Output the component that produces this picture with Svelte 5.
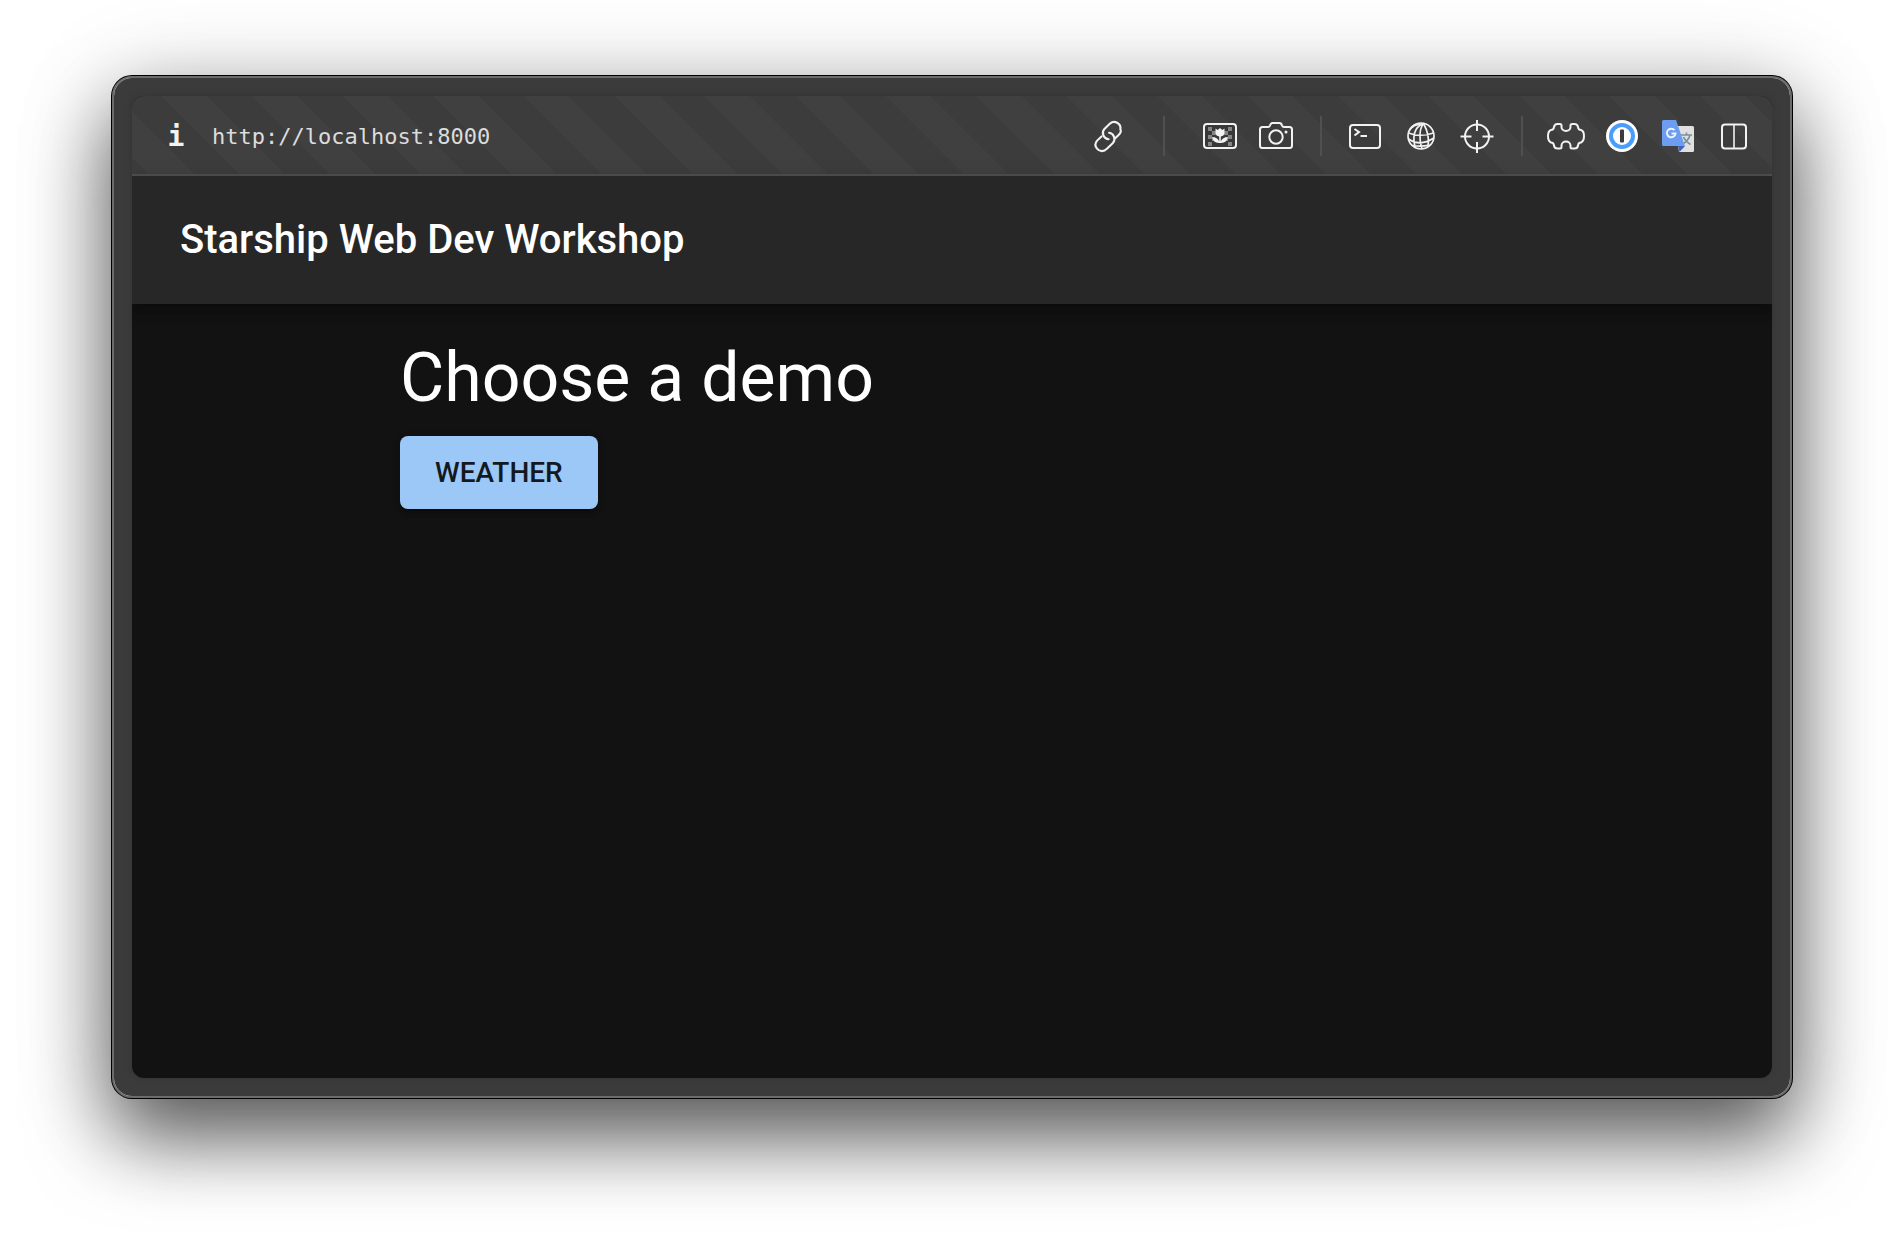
<script>
  let url = $state('http://localhost:8000');
</script>

<main class="desktop">
  <section class="window" aria-label="Browser window">
    <div class="viewport">
      <header class="toolbar">
        <button class="info" aria-label="Page information">i</button>
        <input class="address" aria-label="Address" bind:value={url} spellcheck="false" />

        <button class="tool" aria-label="Copy link">
          <svg viewBox="0 0 36 36">
            <g fill="none" stroke="#f2f2f2" stroke-width="2.1" stroke-linecap="round">
              <path d="M18.6 22.2A6.2 6.2 0 0 1 14.2 12.2L20 6.6A6.3 6.3 0 0 1 30.4 12.2Q31.8 15 28.6 18L25.2 21.2" transform="translate(0 -1)" />
              <path d="M18.4 13.8A6.2 6.2 0 0 1 22.2 24L16 29.9A6.3 6.3 0 0 1 6.3 29.7Q3 25.6 6.4 21.6L10.8 17.4" transform="translate(.7 1)" />
            </g>
          </svg>
        </button>

        <div class="group first">
          <button class="tool" aria-label="Toggle images">
            <svg viewBox="0 0 36 36">
              <rect x="2" y="6" width="32" height="24" rx="3" fill="#383838" stroke="#f2f2f2" stroke-width="2" />
              <path fill="#858585" d="M6 9h4v4h-4zM10 13h4v4h-4zM6 17h4v4h-4zM10 21h4v2h-4zM6 24h4v4h-4zM26 9h4v4h-4zM22 13h4v4h-4zM26 17h4v4h-4zM22 21h4v2h-4zM26 24h4v4h-4z" />
              <path fill="#f2f2f2" d="M13.500 10.500l2.200 1.500L18 10l2.300 2 2.200-1.500v4q0 3.300-3.700 4v5q1.700-4.500 7.200-4.500-.5 5.500-7.200 6h-1.600q-6.700-.5-7.200-6 5.500 0 7.200 4.500v-5q-3.700-.7-3.700-4z" />
            </svg>
          </button>
          <button class="tool" aria-label="Take screenshot">
            <svg viewBox="0 0 36 36" fill="none" stroke="#f2f2f2" stroke-width="2">
              <path d="M4.500 9H10q1.500 0 2-1.500.7-2.500 2.500-2.500h7q1.800 0 2.500 2.500.5 1.500 2 1.500h5.500q2.500 0 2.500 2.500v16q0 2.500-2.500 2.500h-27Q2 30 2 27.500v-16Q2 9 4.500 9z" />
              <circle cx="18" cy="19" r="6.700" />
              <circle cx="28" cy="14" r="1.500" fill="#f2f2f2" stroke="none" />
            </svg>
          </button>
        </div>

        <div class="group">
          <button class="tool" aria-label="Open console">
            <svg viewBox="0 0 36 36" fill="none" stroke="#f2f2f2" stroke-width="2">
              <rect x="3" y="7" width="30" height="23" rx="3" />
              <path d="M7.500 11l4.500 3-4.500 3.500M13.500 18h6.500" />
            </svg>
          </button>
          <button class="tool" aria-label="Network">
            <svg viewBox="0 0 36 36" fill="none" stroke="#f2f2f2" stroke-width="1.700">
              <circle cx="18" cy="18" r="13" />
              <path d="M20.500 5.500C11 9 9 19 12.500 30M20.500 5.500C16 11 16 22 19 31M20.500 5.500Q27 17 25 28.500M20.500 5.500Q9 7 6.500 12.500M5.500 15Q17 19.500 30.500 15M5.500 21Q17 29 30.800 20M10 27.500q8 1.500 16.500-.5" />
            </svg>
          </button>
          <button class="tool" aria-label="Inspect element">
            <svg viewBox="0 0 36 36" fill="none" stroke="#f2f2f2" stroke-width="2">
              <circle cx="18" cy="18.500" r="12" />
              <path d="M18 2v11M18 24v11M1.500 18.500h11M23.500 18.500h11" />
            </svg>
          </button>
        </div>

        <div class="group last">
          <button class="tool" aria-label="Extensions">
            <svg viewBox="0 0 40 36" fill="none" stroke="#f2f2f2" stroke-width="2">
              <path d="M11.500 6H14q1.500 0 1.500 1.500V9a4.500 4 0 0 0 9 0V7.500Q24.500 6 26 6h2.500q3 0 3.500 3 .3 3 3 3 3 1 3 6t-3 6.500q-2.700 0-3 3-.5 3-3.500 3H26q-1.500 0-1.500-1.500V27.500a4.500 4 0 0 0-9 0V29q0 1.500-1.500 1.500h-2.500q-3 0-3.500-3-.3-3-3-3-3-1.500-3-6.500t3-6q2.700 0 3-3 .5-3 3.500-3z" />
            </svg>
          </button>
          <button class="tool" aria-label="Password manager">
            <svg viewBox="0 0 36 36">
              <circle cx="18" cy="18" r="16" fill="#fff" />
              <circle cx="18" cy="18" r="11" fill="#fff" stroke="#4a9dfb" stroke-width="4" />
              <rect x="16" y="11.500" width="4" height="13" rx="1" fill="#3b3b3b" />
            </svg>
          </button>
          <button class="tool" aria-label="Translate page">
            <svg viewBox="0 0 36 36">
              <path fill="#e0e0e0" d="M15 8h17.500q1.500 0 1.500 1.500v23q0 1.500-1.500 1.500H19z" />
              <path d="M21 17h11M26.500 14.500V17M30 17q-1.500 6-8 9.500M23.500 19q2 4.500 7 7.500" fill="none" stroke="#78909c" stroke-width="1.600" />
              <path fill="#4360c4" d="M18 28h7l-5.500 6z" />
              <path fill="#6c9df1" d="M3.500 2H16l9 26H3.500Q2 28 2 26.500v-23Q2 2 3.500 2z" />
              <path d="M14.500 12.200a4.300 4.300 0 1 0 1 3.300h-4" fill="none" stroke="#eef3fd" stroke-width="2" />
            </svg>
          </button>
          <button class="tool" aria-label="Toggle split view">
            <svg viewBox="0 0 36 36" fill="none" stroke="#f2f2f2" stroke-width="2">
              <rect x="6" y="6.500" width="24" height="24" rx="3" />
              <path d="M18 6.500v24" stroke-width="1.600" />
            </svg>
          </button>
        </div>
      </header>

      <header class="app-bar">
        <h1>Starship Web Dev Workshop</h1>
      </header>
      <div class="page">
        <div class="container">
          <h2>Choose a demo</h2>
          <button class="primary">WEATHER</button>
        </div>
      </div>
    </div>
  </section>
</main>

<style>
  :global(body) {
    margin: 0;
    background: #fff;
  }
  .desktop {
    box-sizing: border-box;
    min-height: 100vh;
    padding: 76px 112px 148px;
    display: flex;
    overflow: hidden;
    font-family: Roboto, sans-serif;
  }
  .window {
    flex: 1;
    display: flex;
    padding: 18px;
    border: 2px solid #6b6c6b;
    border-radius: 20px;
    background: #3b3b3b;
    background-clip: padding-box;
    box-shadow:
      0 0 0 1px #000,
      0 40px 80px rgba(0, 0, 0, 0.6),
      0 12px 100px rgba(0, 0, 0, 0.2);
  }
  .viewport {
    flex: 1;
    display: flex;
    flex-direction: column;
    border-radius: 12px;
    overflow: hidden;
    background: #121212;
    box-shadow: 0 0 8px rgba(0, 0, 0, 0.12);
  }
  button {
    font-family: inherit;
    border: 0;
    padding: 0;
    cursor: pointer;
  }
  .toolbar {
    box-sizing: border-box;
    display: flex;
    align-items: center;
    height: 80px;
    padding: 2px 20px 0 28px;
    border-bottom: 2px solid #505050;
    background: repeating-linear-gradient(45deg, #3c3c3c 0 12px, #404040 12px 44px, #3c3c3c 44px 64px);
  }
  .info {
    width: 32px;
    padding-top: 2px;
    background: none;
    color: #f2f2f2;
    font: bold 28px/36px 'DejaVu Sans Mono', monospace;
  }
  .address {
    flex: 1;
    min-width: 0;
    margin-left: 20px;
    padding: 2px 0 0;
    border: 0;
    outline: 0;
    background: none;
    color: #dcdcdc;
    font: 22px/36px 'DejaVu Sans Mono', monospace;
  }
  .tool {
    display: flex;
    justify-content: center;
    width: 36px;
    height: 36px;
    background: none;
  }
  .tool svg {
    flex: none;
    height: 36px;
  }
  .group {
    display: flex;
    align-items: center;
    gap: 20px;
    height: 40px;
    padding: 0 26px 0 25px;
    border-left: 2px solid #505050;
  }
  .group.first {
    margin-left: 37px;
    padding-left: 37px;
  }
  .group.last {
    padding-right: 0;
  }
  .app-bar {
    display: flex;
    align-items: center;
    min-height: 128px;
    padding: 0 48px;
    background: #272727;
    box-shadow:
      0 4px 8px -2px rgba(0, 0, 0, 0.2),
      0 8px 10px rgba(0, 0, 0, 0.14),
      0 2px 20px rgba(0, 0, 0, 0.12);
  }
  h1 {
    margin: 0;
    color: #fff;
    font-size: 40px;
    line-height: 64px;
    font-weight: 500;
  }
  .container {
    box-sizing: border-box;
    max-width: 1200px;
    margin: 0 auto;
    padding: 32px 48px;
  }
  h2 {
    margin: 0 0 16px;
    color: #fff;
    font-size: 68px;
    line-height: 84px;
    font-weight: 400;
  }
  .primary {
    padding: 12px 35px;
    border-radius: 8px;
    background: #9bc8f6;
    color: #14191f;
    font-size: 28px;
    line-height: 49px;
    font-weight: 500;
    box-shadow:
      0 6px 2px -4px rgba(0, 0, 0, 0.2),
      0 4px 4px rgba(0, 0, 0, 0.14),
      0 2px 10px rgba(0, 0, 0, 0.12);
  }
</style>
